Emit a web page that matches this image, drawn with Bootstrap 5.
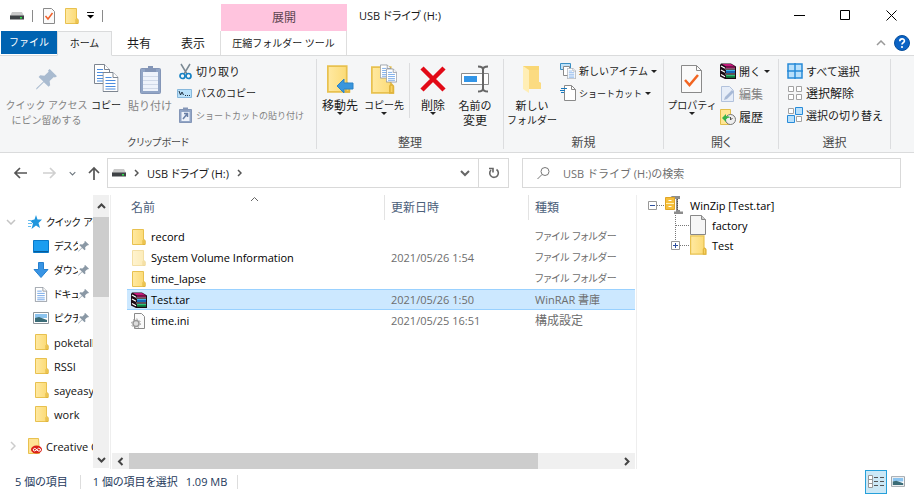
<!DOCTYPE html>
<html lang="ja">
<head>
<meta charset="utf-8">
<meta name="viewport" content="width=device-width, initial-scale=1">
<title>USB ドライブ (H:)</title>
<link href="https://cdn.jsdelivr.net/npm/bootstrap@5.3.0/dist/css/bootstrap.min.css" rel="stylesheet">
<style>
body{font-family:"Open Sans","Noto Sans CJK JP",sans-serif;font-size:12px;line-height:15px;color:#1a1a1a;background:#fff;font-feature-settings:"palt";white-space:nowrap}
button{background:none;border:0;padding:0;color:inherit;line-height:15px}
svg{display:block;flex:none}
.mid{font-size:11px}
.kana{font-size:10px}
.tiny{font-size:9px}
.step{margin-left:10px}
.titlebar{height:31px}
.quick{width:221px;padding-left:10px}
.quick-sep{width:1px;height:12px;background:#8a8a8a}
.context{width:126px;background:#ffc4de;margin-top:4px;color:#5c4450}
.wbtn{width:46px}
.tabs{height:25px;padding-left:1px;border-bottom:1px solid #dadbdc}
.tab-file{width:56px;height:23px;background:#0063b1;color:#fff}
.tab-home{width:55px;height:25px;background:#f5f6f7;border:1px solid #dadbdc;border-bottom-color:#f5f6f7}
.tab-item{width:54px;height:24px}
.tab-tool{width:127px;height:24px;border:solid #dedede;border-width:0 1px}
.ribbon{height:97px;background:#f5f6f7;border-bottom:1px solid #dadbdc;padding:3px 0}
.group{border-right:1px solid #dcdddf}
.tools{height:75px}
.caption{color:#4a4a4a;text-align:center;line-height:17px}
.big{display:flex;flex-direction:column;align-items:center;flex:none;padding-top:4px}
.big .pic{height:32px;display:flex;align-items:center;margin-bottom:3px}
.big .arrow{margin-top:-1px}
.small-tools{display:flex;flex-direction:column;padding-top:1px}
.small-tools button{height:22px;display:flex;align-items:center;gap:3px}
.small-tools .pic{width:16px}
.off{color:#838383}
.arrow{display:block;border:solid transparent;border-width:3px 3px 0;border-top-color:#222}
.w-pin{width:77px}.w-a{width:42px}.w-b{width:46px}.w-c{width:56px}.w-d{width:38px}
.g1{width:317px}.g1 .tools{padding-left:8px}.g2{width:187px}.g3{width:160px}.g4{width:115px}.g5{width:112px}
.g4 .small-tools{gap:1px}
.inner-sep{width:1px;height:55px;margin-top:4px;background:#dcdddf}
.address{height:42px;padding:5px 13px 7px 0}
.nav-arrows{width:107px;padding-left:13px}
.boxed{border:1px solid #d9d9d9}
.path{flex:400 1 0}
.search{flex:363 1 0;margin-left:13px;padding-left:14px}
.search input{border:0;outline:0;width:100%;font-size:11px;padding:0}
.search input::placeholder{color:#707070;opacity:1}
.refresh{width:30px;border-left:1px solid #d9d9d9}
.side{width:111px;border-right:1px solid #eee}
.side-list{width:93px;padding-top:15px;overflow:hidden;font-size:11px}
.side-list a{height:24px;display:flex;align-items:center;color:#111;text-decoration:none}
.side-list .sub{padding-left:33px}
.side-list .top{padding-left:6px}
.side-list .sub .pic{flex:0 0 21px}
.side-list .clip{overflow:hidden;width:24px;flex:none}
.vbar{width:16px;background:#f0f0f0;margin-bottom:1px}
.vthumb{height:80px;background:#cdcdcd}
.files{flex:525 1 0;border-right:1px solid #eee;min-width:0}
.listing{margin-left:16px;padding-right:1px;font-size:11px}
.listing table{table-layout:fixed;width:100%;border-collapse:separate;border-spacing:0}
.listing th{height:31px;padding:0;vertical-align:top;font-weight:400;font-size:12px;color:#4c607a}
.listing th div{height:25px;padding:5px 0 0 6px;border-left:1px solid #e3e3e3}
.listing th:first-child div{padding-left:3px;border-color:transparent}
.listing td{height:21px;padding:0 0 0 7px;color:#6d6d6d}
.listing td:first-child{padding-left:4px;color:#000}
.listing .picked td{background:#cce8ff;border:solid #99d1ff;border-width:1px 0}
.listing .wide{font-size:12px}
.col-name{width:257px}.col-date{width:144px}
.fname{display:flex;align-items:center;gap:4px}
.sort{position:absolute;left:123px;top:1px}
.hbar{height:16px;background:#f0f0f0;margin:0 1px}
.hthumb{flex:409 1 0;background:#cdcdcd}
.hrest{flex:80 1 0}
.tree{flex:266 1 0;padding-left:11px;list-style:none;margin:0;font-size:11px;color:#000}
.tree li{height:20px;display:flex;align-items:center}
.status{height:25px;color:#1e395b;padding:0 9px 0 15px;font-size:11px}
.status-sep{width:1px;height:14px;background:#ddd}
.status .sep-first{margin:0 2px 0 12px}
.view-on{width:22px;height:24px;border:1px solid #26a0da;background:#cbe8f6}
</style>
</head>
<body>
<svg width="0" height="0" class="position-absolute" aria-hidden="true">
<defs>
<linearGradient id="fg" x2="1"><stop stop-color="#ffe9a2"/><stop offset="1" stop-color="#fbd971"/></linearGradient>
<symbol id="folder" viewBox="0 0 14 16"><path d="M.5.5h11v10l1.500 1.500v3.500H.5z" fill="url(#fg)" stroke="#e8c14f"/><path d="M11 15.500v-4l1-1 1 1v4z" fill="#f8d263" stroke="#e0b43d"/></symbol>
<symbol id="drive" viewBox="0 0 14 8"><path d="M2 0h10l2 4H0z" fill="#c9c9c9"/><path d="M0 3.500h14V7.500H0z" fill="#3e4245"/><path d="M10 5h2v1.500h-2z" fill="#2fe04b"/></symbol>
<symbol id="pin" viewBox="0 0 20 20"><path d="M13 0l7 7-2 1-1-.5-4 4 .5 4-1.500 1.500-4.500-4.500L1 19l-1 .5.5-1.500L7 12 2.500 7.500 4 6l4 .5 4-4L11.500 1.500z"/></symbol>
<symbol id="lines" viewBox="0 0 16 20"><path d="M.5.5h10l5 5v14H.5z" fill="#fff" stroke="#7d8590"/><path d="M10.500.5v5h5" fill="#fff" stroke="#7d8590"/><path d="M3 5.500h6M3 8.500h10M3 11.500h10M3 14.500h10M3 17h10" stroke="#4b8de0"/></symbol>
<symbol id="books" viewBox="0 0 16 16"><path d="M1 .5h10l5 3V16H5L0 13.500V2z" fill="#1a0a14"/><path d="M2 1h9l4 2.500H6z" fill="#c2187a"/><path d="M6 4h9v1.500H6z" fill="#8b0f52"/><path d="M6 7h9v1H6z" fill="#3fb6e8"/><path d="M6 8h9v2H6z" fill="#1467b8"/><path d="M6 12h9v1H6z" fill="#2ec27a"/><path d="M6 13h9v1.800H6z" fill="#0f8040"/><path d="M1 3l4 2.200M1 7l4 2.200M1 11.500l4 2.200" stroke="#fff" stroke-width="1.300"/><path d="M5 6h10M5 11h10" stroke="#ddd" stroke-width=".7"/></symbol>
<symbol id="image" viewBox="0 0 16 12"><path d="M.5.5h15v11H.5z" fill="#fff" stroke="#8d959b"/><path d="M2 2h12v4H2z" fill="#8cc4ef"/><path d="M2 6l4-1 8 3v2H2z" fill="#3b6c77"/></symbol>
<symbol id="chev" viewBox="0 0 10 6"><path d="M1 1l4 4 4-4" fill="none" stroke="currentColor" stroke-width="1.500"/></symbol>
</defs>
</svg>
<div class="vh-100 d-flex flex-column overflow-hidden">
<header class="titlebar d-flex">
  <div class="quick d-flex align-items-center">
    <svg width="14" height="8"><use href="#drive"/></svg><span class="quick-sep ms-2"></span>
    <button class="step" aria-label="プロパティ"><svg width="12" height="16" viewBox="0 0 12 16"><path d="M.5.5h8l3 3v12H.5z" fill="#fafafa" stroke="#8a8a8a"/><path d="M2.500 8l2.500 3 4.500-6" fill="none" stroke="#f0602a" stroke-width="1.500"/></svg></button>
    <button class="step" aria-label="新しいフォルダー"><svg width="14" height="16"><use href="#folder"/></svg></button>
    <button class="ms-2" aria-label="カスタマイズ"><svg width="7" height="7"><path d="M0 .5h7" stroke="#111"/><path d="M0 3h7L3.500 6.500z"/></svg></button>
    <span class="quick-sep ms-2"></span>
  </div>
  <div class="context d-flex align-items-center justify-content-center">展開</div>
  <div class="flex-grow-1 d-flex align-items-center"><span class="ms-2 ps-1 mid">USB ドライブ (H:)</span></div>
  <button class="wbtn" aria-label="最小化"><svg class="mx-auto" width="11" height="11"><path d="M0 5.500h11" stroke="#000"/></svg></button>
  <button class="wbtn" aria-label="最大化"><svg class="mx-auto" width="11" height="11"><path d="M.5.5h9v9h-9z" fill="none" stroke="#000"/></svg></button>
  <button class="wbtn" aria-label="閉じる"><svg class="mx-auto" width="11" height="11"><path d="M.5.5l10 10m0-10l-10 10" stroke="#000"/></svg></button>
</header>
<nav class="tabs d-flex">
  <button class="tab-file kana">ファイル</button><button class="tab-home kana">ホーム</button><button class="tab-item">共有</button><button class="tab-item">表示</button><button class="tab-tool kana">圧縮フォルダー ツール</button>
  <div class="ms-auto d-flex align-items-center gap-2 pe-1">
    <button aria-label="リボンの最小化"><svg width="10" height="6" viewBox="0 0 10 6"><path d="M1 5l4-4 4 4" fill="none" stroke="#999" stroke-width="1.500"/></svg></button>
    <button aria-label="ヘルプ"><svg width="16" height="16"><circle cx="8" cy="8" r="7.500" fill="#0b63c5" stroke="#084f9c"/><path d="M5.800 6.200c0-3 4.600-3 4.600-.3C10.400 7.600 8 7.800 8 9.600" fill="none" stroke="#fff" stroke-width="1.700"/><circle cx="8" cy="12" r="1.100" fill="#fff"/></svg></button>
  </div>
</nav>
<section class="ribbon d-flex" aria-label="リボン">
  <div class="group g1"><div class="tools d-flex">
    <button class="big w-pin off"><span class="pic"><svg width="21" height="21" fill="#a9bbd0"><use href="#pin"/></svg></span><span class="kana">クイック アクセス</span><span class="kana">にピン留めする</span></button>
    <button class="big w-a"><span class="pic"><svg width="25" height="30" viewBox="0 0 25 30"><use href="#lines" width="16" height="20"/><use href="#lines" x="8.500" y="8" width="16" height="20"/></svg></span><span class="kana">コピー</span></button>
    <button class="big w-b off"><span class="pic"><svg width="21" height="29"><rect x=".5" y="3.500" width="20" height="25" rx="1" fill="#91a5c6" stroke="#8496b7"/><path d="M3 7h15v19H3z" fill="#eef3fb"/><path d="M5 4h11v3H5zM8 1h5v3H8z" fill="#8496b7"/><path d="M3 11.500h15M3 15.500h15M3 19.500h15M3 23.500h15" stroke="#d0d9e8"/></svg></span><span class="mid">貼り付け</span></button>
    <div class="small-tools ms-1">
      <button><span class="pic"><svg class="mx-auto" width="13" height="17"><path d="M2 1l6 10M11 1L5 11" stroke="#7b8994" stroke-width="1.500"/><circle cx="3.500" cy="13" r="2.500" fill="none" stroke="#1682c4" stroke-width="1.700"/><circle cx="9.500" cy="13" r="2.500" fill="none" stroke="#1682c4" stroke-width="1.700"/></svg></span><span class="mid">切り取り</span></button>
      <button><span class="pic"><svg width="15" height="9"><path d="M.5.5h14v8H.5z" fill="#b9e1fa" stroke="#87b8dc"/><path d="M2 2l1.500 4L5 3l1.500 3" fill="none" stroke="#234"/><path d="M8 6.500h1m1 0h1m1 0h1" stroke="#234"/></svg></span><span class="kana">パスのコピー</span></button>
      <button class="off"><span class="pic"><svg class="mx-auto" width="13" height="16"><path d="M.5 2.500h12v13H.5z" fill="#91a5c6" stroke="#8496b7"/><path d="M4 .5h5v3H4z" fill="#8496b7"/><path d="M2.500 5h8v9h-8z" fill="#eef3fb"/><path d="M4 12l4-5M5 6.500h3.500V10" fill="none" stroke="#687fa6" stroke-width="1.500"/></svg></span><span class="tiny">ショートカットの貼り付け</span></button>
    </div></div><div class="caption kana">クリップボード</div></div>
  <div class="group g2"><div class="tools d-flex">
    <button class="big w-b"><span class="pic"><svg width="27" height="28"><use href="#folder" width="24" height="28"/><path d="M10 21l7-7v4h9v6h-9v4z" fill="#3a96dd" stroke="#2b83c8"/></svg></span>移動先<i class="arrow"></i></button>
    <button class="big w-a"><span class="pic"><svg width="26" height="30" viewBox="0 0 26 30"><use href="#folder" y="2" width="24" height="28"/><use href="#lines" x="9" width="11" height="15"/><use href="#lines" x="15" y="4" width="11" height="15"/></svg></span><span class="kana">コピー先</span><i class="arrow"></i></button>
    <span class="inner-sep ms-1"></span>
    <button class="big w-b"><span class="pic"><svg width="26" height="26"><path d="M2 2l22 22M24 2L2 24" stroke="#e20a17" stroke-width="4.500"/></svg></span>削除<i class="arrow"></i></button>
    <button class="big w-d"><span class="pic"><svg width="28" height="28"><path d="M.5 8.500h27v11H.5z" fill="#fff" stroke="#8b8b8b"/><path d="M3 11h13v6H3z" fill="#3295e7"/><path d="M17 1.500q5 0 5 3v19q0 3-5 3m10-25q-5 0-5 3v19q0 3 5 3" fill="none" stroke="#666" stroke-width="2"/></svg></span><span class="mid">名前の</span><span>変更</span></button>
    </div><div class="caption">整理</div></div>
  <div class="group g3"><div class="tools d-flex">
    <button class="big w-c"><span class="pic"><svg width="20" height="28"><path d="M1 1h16v16l2 1v6H1z" fill="#f9d775"/><path d="M1 1l6 4v23l-6-4z" fill="#ffeeb5"/><path d="M7 5h10v12l2 1v6H7z" fill="#fbdb81"/></svg></span><span class="mid">新しい</span><span class="kana">フォルダー</span></button>
    <div class="small-tools">
      <button><span class="pic"><svg width="16" height="16" viewBox="0 0 16 16"><path d="M.5.5h10v6H.5z" fill="#bfe2f9" stroke="#3a8fc4"/><path d="M3.500 3.500h6v9h-6z" fill="#fff" stroke="#8a8a8a"/><use href="#lines" x="7" y="5" width="9" height="11"/></svg></span><span class="kana">新しいアイテム</span><i class="arrow"></i></button>
      <button><span class="pic"><svg width="16" height="16"><path d="M4.500.5h7l4 4v11h-11z" fill="#fff" stroke="#8a8a8a"/><path d="M11.500.5v4h4" fill="none" stroke="#8a8a8a"/><path d="M1 3.500h6M0 5.500h5M1 7.500h3" stroke="#1979bd"/></svg></span><span class="tiny">ショートカット</span><i class="arrow"></i></button>
    </div></div><div class="caption">新規</div></div>
  <div class="group g4"><div class="tools d-flex">
    <button class="big w-c"><span class="pic"><svg width="22" height="28"><path d="M.5.5h15l5 5v22H.5z" fill="#fafafa" stroke="#8a8a8a"/><path d="M15.500.5v5h5" fill="none" stroke="#8a8a8a"/><path d="M4 15l4.500 5L17 10" fill="none" stroke="#f26522" stroke-width="2.500"/></svg></span><span class="kana">プロパティ</span><i class="arrow"></i></button>
    <div class="small-tools">
      <button><span class="pic"><svg width="16" height="16"><use href="#books"/></svg></span><span class="mid">開く</span><i class="arrow"></i></button>
      <button class="off"><span class="pic"><svg class="mx-auto" width="14" height="16"><path d="M.5.5h8l4 4v11H.5z" fill="#e6edf8" stroke="#b2c2dc"/><path d="M3 14l1-3 7-7 2 2-7 7z" fill="#a7b9d6"/></svg></span><span>編集</span></button>
      <button><span class="pic"><svg width="16" height="16"><path d="M.5.5h10v15H.5z" fill="#ffe694" stroke="#e2be4c"/><circle cx="10.500" cy="10.500" r="5" fill="#eee" stroke="#777"/><path d="M10.500 8v3l2-2" fill="none" stroke="#555"/><path d="M2 9l4-4v2.500q3-1 4 1-3 0-4 2V13z" fill="#35b34a"/></svg></span><span>履歴</span></button>
    </div></div><div class="caption">開く</div></div>
  <div class="group g5"><div class="tools d-flex">
    <div class="small-tools ms-2">
      <button><span class="pic"><svg width="16" height="16"><path d="M1 1h14v14H1zM8 0v16M0 8h16" fill="#b9e0fb" stroke="#288bd8" stroke-width="1.500"/></svg></span><span class="mid">すべて選択</span></button>
      <button><span class="pic"><svg width="16" height="16"><path d="M1.500 1.500h5v5h-5zM9.500 1.500h5v5h-5zM1.500 9.500h5v5h-5zM9.500 9.500h5v5h-5z" fill="#fff" stroke="#a2a2a2"/></svg></span><span>選択解除</span></button>
      <button><span class="pic"><svg width="16" height="16"><path d="M1.500 1.500h5v5h-5zM9.500 9.500h5v5h-5z" fill="#fff" stroke="#a2a2a2"/><path d="M8.500.5h7v7h-7zM.5 8.500h7v7h-7z" fill="#b9e0fb" stroke="#288bd8"/></svg></span><span class="mid">選択の切り替え</span></button>
    </div></div><div class="caption">選択</div></div>
</section>
<div class="address d-flex">
  <div class="nav-arrows d-flex align-items-center">
    <button aria-label="戻る"><svg width="14" height="12" fill="none" stroke="#555" stroke-width="1.700"><path d="M14 6H2M7 1L2 6l5 5"/></svg></button>
    <button class="ms-3" aria-label="進む"><svg width="14" height="12" fill="none" stroke="#d0d0d0" stroke-width="1.700"><path d="M0 6h12M7 1l5 5-5 5"/></svg></button>
    <button class="ms-2 ps-1 text-secondary" aria-label="履歴"><svg width="7" height="5"><use href="#chev"/></svg></button>
    <button class="ms-2 ps-1" aria-label="上へ"><svg width="12" height="14" fill="none" stroke="#555" stroke-width="1.700"><path d="M6 14V2M1 7l5-5 5 5"/></svg></button>
  </div>
  <div class="path boxed d-flex align-items-center">
    <svg class="ms-1" width="14" height="8"><use href="#drive"/></svg>
    <svg class="ms-2" width="5" height="8" fill="none" stroke="#555"><path d="M1 1l3 3-3 3" stroke-width="1.500"/></svg>
    <span class="mid ms-2">USB ドライブ (H:)</span>
    <svg class="ms-2" width="5" height="8" fill="none" stroke="#555"><path d="M1 1l3 3-3 3" stroke-width="1.500"/></svg>
    <button class="ms-auto me-1" aria-label="以前の場所"><svg width="10" height="7" fill="none" stroke="#666" stroke-width="2"><path d="M1 1l4 4 4-4"/></svg></button>
    <button class="refresh h-100 ms-1" aria-label="更新"><svg class="mx-auto" width="12" height="12" fill="none" stroke="#666" stroke-width="1.600"><path d="M8.500 2.500A4.300 4.300 0 1 1 3 3M1 1.500h4v4"/></svg></button>
  </div>
  <label class="search boxed d-flex align-items-center"><svg class="me-2 flex-shrink-0" width="14" height="14" fill="none" stroke="#777"><circle cx="8" cy="5.500" r="4"/><path d="M5 8.500L.5 13"/></svg><input type="text" class="ms-1" aria-label="検索" placeholder="USB ドライブ (H:)の検索"></label>
</div>
<main class="flex-grow-1 d-flex overflow-hidden">
  <aside class="side d-flex flex-shrink-0">
    <nav class="side-list">
      <a href="#" class="top"><svg class="me-2" width="10" height="6" color="#c4c4c4"><use href="#chev"/></svg><svg class="ms-1 me-1" width="14" height="14"><path d="M8 0l1.500 4.500H14L10.500 8l1.500 5-4-2.500L3.500 14 5 8.500 2 5.500l4.500-1z" fill="#2196dd"/><path d="M0 5.500h4M0 8.500h4M0 11.500h3" stroke="#65bdf0"/></svg><span class="kana">クイック アクセス</span></a>
      <a href="#" class="sub"><span class="pic"><svg width="16" height="13"><path d="M.5.500h15v12H.5z" fill="#1b9df0" stroke="#0878c8"/><path d="M1 11.500h14" stroke="#075b98"/></svg></span><span class="clip kana">デスクトップ</span><svg width="11" height="11" fill="#8a98a5"><use href="#pin"/></svg></a>
      <a href="#" class="sub"><span class="pic"><svg width="16" height="16"><path d="M5.500.5h5v7h4.500L8 15.500 1 7.500h4.500z" fill="#3894e4" stroke="#2680cf"/></svg></span><span class="clip kana">ダウンロード</span><svg width="11" height="11" fill="#8a98a5"><use href="#pin"/></svg></a>
      <a href="#" class="sub"><span class="pic"><svg width="16" height="15"><use href="#lines"/></svg></span><span class="clip kana">ドキュメント</span><svg width="11" height="11" fill="#8a98a5"><use href="#pin"/></svg></a>
      <a href="#" class="sub"><span class="pic"><svg width="16" height="12"><use href="#image"/></svg></span><span class="clip kana">ピクチャ</span><svg width="11" height="11" fill="#8a98a5"><use href="#pin"/></svg></a>
      <a href="#" class="sub"><span class="pic"><svg width="18" height="16"><use href="#folder"/></svg></span>poketalk</a>
      <a href="#" class="sub"><span class="pic"><svg width="18" height="16"><use href="#folder"/></svg></span>RSSI</a>
      <a href="#" class="sub"><span class="pic"><svg width="18" height="16"><use href="#folder"/></svg></span>sayeasy</a>
      <a href="#" class="sub"><span class="pic"><svg width="18" height="16"><use href="#folder"/></svg></span>work</a>
      <a href="#" class="top mt-2"><svg class="ms-1 me-2" width="6" height="10" fill="none" stroke="#ccc"><path d="M1 1l4 4-4 4" stroke-width="1.500"/></svg><svg class="ms-1 me-1" width="14" height="16"><path d="M.5.5h10l1 15H.5z" fill="#ffe394" stroke="#e8c14f"/><ellipse cx="8.500" cy="11.500" rx="5.500" ry="4" fill="#db2118"/><path d="M5 12q1-3 3-1l2 2q3 1 2.500-2-2-2-4 1-2 2-3.500 0" fill="none" stroke="#fff"/></svg>Creative Cloud Files</a>
    </nav>
    <div class="vbar d-flex flex-column">
      <button class="py-2" aria-label="上へスクロール"><svg class="mx-auto" width="9" height="6" fill="none" stroke="#444" stroke-width="2"><path d="M1 5l3.500-3.500L8 5"/></svg></button>
      <span class="vthumb d-block"></span>
      <button class="mt-auto pb-1" aria-label="下へスクロール"><svg class="mx-auto" width="9" height="7" fill="none" stroke="#444" stroke-width="2"><path d="M1 1l3.500 3.500L8 1"/></svg></button>
    </div>
  </aside>
  <section class="files d-flex flex-column">
    <div class="listing flex-grow-1 position-relative">
      <svg class="sort" width="9" height="6" fill="none" stroke="#666"><path d="M1 5l3.500-3.500L8 5"/></svg>
      <table>
        <colgroup><col class="col-name"><col class="col-date"><col></colgroup>
        <thead><tr><th><div>名前</div></th><th><div>更新日時</div></th><th><div>種類</div></th></tr></thead>
        <tbody>
        <tr><td><div class="fname"><svg width="16" height="16"><use href="#folder"/></svg>record</div></td><td></td><td class="kana">ファイル フォルダー</td></tr>
        <tr><td><div class="fname"><svg class="opacity-50" width="16" height="16"><use href="#folder"/></svg>System Volume Information</div></td><td>2021/05/26 1:54</td><td class="kana">ファイル フォルダー</td></tr>
        <tr><td><div class="fname"><svg width="16" height="16"><use href="#folder"/></svg>time_lapse</div></td><td></td><td class="kana">ファイル フォルダー</td></tr>
        <tr class="picked"><td><div class="fname"><svg width="16" height="16"><use href="#books"/></svg>Test.tar</div></td><td>2021/05/26 1:50</td><td>WinRAR 書庫</td></tr>
        <tr><td><div class="fname"><svg width="16" height="16"><path d="M3.500.5h7l3 3v12h-10z" fill="#fafafa" stroke="#8a8a8a"/><circle cx="5" cy="10.500" r="3" fill="#ddd" stroke="#999" stroke-width="1.500"/><circle cx="5" cy="10.500" r="4.500" fill="none" stroke="#999" stroke-dasharray="1.500 2"/></svg>time.ini</div></td><td>2021/05/25 16:51</td><td class="wide">構成設定</td></tr>
        </tbody>
      </table>
    </div>
    <div class="hbar d-flex">
      <button class="px-1" aria-label="左へスクロール"><svg width="9" height="9" fill="none" stroke="#444" stroke-width="2"><path d="M6.500 1L3 4.500 6.500 8"/></svg></button>
      <span class="hthumb"></span><span class="hrest"></span>
      <button class="px-1" aria-label="右へスクロール"><svg width="9" height="9" fill="none" stroke="#444" stroke-width="2"><path d="M3 1l3.500 3.500L3 8"/></svg></button>
    </div>
  </section>
  <ul class="tree" aria-label="WinZip">
    <li><svg width="38" height="20"><path d="M9 10.500h8" stroke="#777" stroke-dasharray="1 1"/><path d="M.5 6.500h8v8h-8z" fill="#fff" stroke="#999"/><path d="M2 10.500h5" stroke="#2c4f9e"/><path d="M21 3l3-2h8v3h-2v11h2v1.500h3V19h-9v-2.500h2V4z" fill="#8d8d8d"/><path d="M29.500 4v11" stroke="#555" stroke-dasharray="1 1"/><path d="M17.500 2.500h9v12h-9z" fill="#f6bf3c" stroke="#e0a526"/><path d="M18 8.500h8" stroke="#fff2b5"/><path d="M20.500 5.500h3M20.500 11.500h3" stroke="#fff"/></svg><span class="ms-1">WinZip [Test.tar]</span></li>
    <li><svg width="60" height="20"><path d="M27.500 0v20M28 10.500h13" stroke="#777" stroke-dasharray="1 1"/><path d="M42.500.5h11l4 4v15h-15z" fill="#f6f6f6" stroke="#888"/><path d="M53.500.5v4h4" fill="#ccc" stroke="#888"/></svg><span class="ms-1">factory</span></li>
    <li><svg width="60" height="20"><path d="M27.500 0v7M32 10.500h9" stroke="#777" stroke-dasharray="1 1"/><path d="M23.500 6.500h8v8h-8z" fill="#fff" stroke="#999"/><path d="M25 10.500h5M27.500 8v5" stroke="#2c4f9e"/><use href="#folder" x="42" y="0" width="17" height="20"/></svg><span class="ms-1">Test</span></li>
  </ul>
</main>
<footer class="status d-flex align-items-center">
  <span>5 個の項目</span><span class="status-sep sep-first"></span><span class="step">1 個の項目を選択</span><span class="ms-2">1.09 MB</span><span class="status-sep step"></span>
  <button class="view-on ms-auto" aria-label="詳細"><svg class="mx-auto" width="17" height="13"><path d="M.5.5h4v12h-4zM0 4.500h5M0 8.500h5" fill="#fff" stroke="#999"/><path d="M6 2.500h4m2 0h4M6 6.500h4m2 0h4M6 10.500h4m2 0h4" stroke="#555"/></svg></button>
  <button class="ms-1" aria-label="大アイコン"><svg width="14" height="11"><use href="#image"/></svg></button>
</footer>
</div>
<script src="https://cdn.jsdelivr.net/npm/bootstrap@5.3.0/dist/js/bootstrap.bundle.min.js"></script>
</body>
</html>
